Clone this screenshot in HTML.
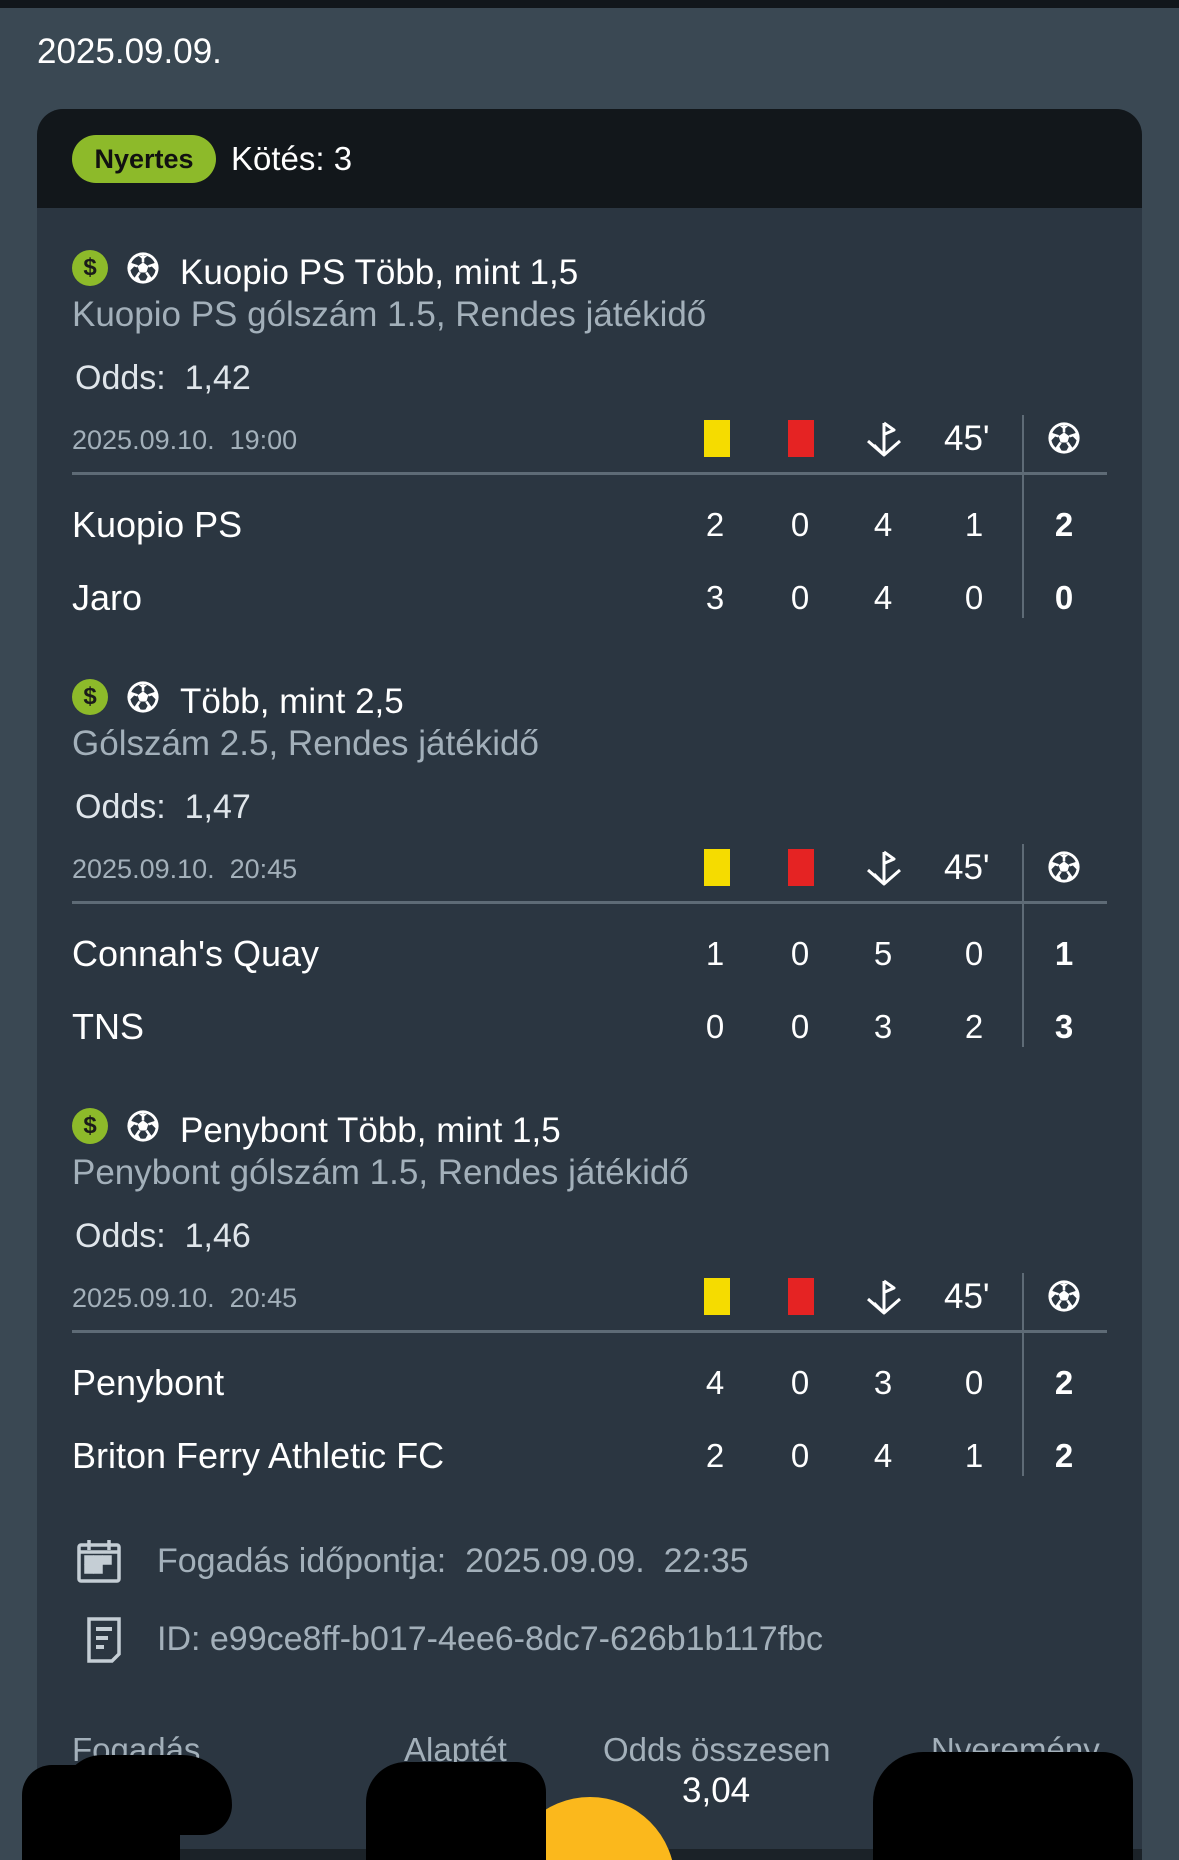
<!DOCTYPE html>
<html style="width:1179px;height:1860px;overflow:hidden"><head><meta charset="utf-8"><style>
*{margin:0;padding:0;box-sizing:border-box}
body{width:1179px;height:1860px;background:#3a4853;font-family:"Liberation Sans",sans-serif;position:relative;overflow:hidden;color:#fff}
#w{position:absolute;left:0;top:0;width:1179px;height:1860px;overflow:hidden}
.a{position:absolute;white-space:nowrap}
.t{font-size:35px;line-height:40px}
.sub{font-size:35px;line-height:40px;color:#a3b0ba}
.num{font-size:33px;line-height:40px;width:40px;text-align:center}
.dt{font-size:27px;line-height:34px;color:#a3b0ba}
</style></head><body><div id="w">
<div class="a" style="left:0;top:0;width:1179px;height:8px;background:#11161b"></div>
<div class="a t" style="left:37px;top:32px">2025.09.09.</div>
<div class="a" style="left:37px;top:109px;width:1105px;height:1751px;background:#2b3641;border-radius:26px 26px 0 0"></div>
<div class="a" style="left:37px;top:109px;width:1105px;height:99px;background:#12171b;border-radius:26px 26px 0 0"></div>
<div class="a" style="left:72px;top:135px;width:144px;height:48px;background:#8dba2a;border-radius:24px;color:#111;font-size:27px;line-height:48px;text-align:center;font-weight:bold">Nyertes</div>
<div class="a t" style="left:231px;top:139px;font-size:33px">Kötés: 3</div>

<div id="secs"></div>
<script>
const data=[
 ["Kuopio PS Több, mint 1,5","Kuopio PS gólszám 1.5, Rendes játékidő","1,42","19:00",["Kuopio PS",2,0,4,1,2],["Jaro",3,0,4,0,0]],
 ["Több, mint 2,5","Gólszám 2.5, Rendes játékidő","1,47","20:45",["Connah's Quay",1,0,5,0,1],["TNS",0,0,3,2,3]],
 ["Penybont Több, mint 1,5","Penybont gólszám 1.5, Rendes játékidő","1,46","20:45",["Penybont",4,0,3,0,2],["Briton Ferry Athletic FC",2,0,4,1,2]]
];
const ball=(cx,cy,r)=>`<svg class="a" style="left:${cx-r}px;top:${cy-r}px" width="${2*r}" height="${2*r}" viewBox="0 0 24 24"><circle cx="12" cy="12" r="11" fill="#fff"/><circle cx="12" cy="12" r="9" fill="#2b3641"/><polygon points="12,8 15.8,10.8 14.4,15.2 9.6,15.2 8.2,10.8" fill="#fff"/><path d="M12 3 L12 8 M15.8 10.8 L20.5 9.3 M14.4 15.2 L17.3 19.5 M9.6 15.2 L6.7 19.5 M8.2 10.8 L3.5 9.3" stroke="#fff" stroke-width="1.8"/><path d="M9 3.4 L15 3.4 L12 6Z M20.8 7.5 L21.3 14 L18.3 11Z M3.2 7.5 L2.7 14 L5.7 11Z M5.5 19.8 L10.5 21.3 L8.3 17.5Z M18.5 19.8 L13.5 21.3 L15.7 17.5Z" fill="#fff"/></svg>`;
let h="";
const cols=[715,800,883,974,1064];
data.forEach((d,i)=>{
 const B=273+429*i;
 h+=`<div class="a" style="left:72px;top:${B-23}px;width:36px;height:36px;border-radius:50%;background:#8dba2a;color:#1a1a1a;font-size:24px;line-height:36px;text-align:center;font-weight:bold">$</div>`;
 h+=ball(143,B-5,17);
 h+=`<div class="a t" style="left:180px;top:${B-20}px">${d[0]}</div>`;
 h+=`<div class="a sub" style="left:72px;top:${B+22}px">${d[1]}</div>`;
 h+=`<div class="a t" style="left:75px;top:${B+85}px;color:#dfe5ea;font-size:34px">Odds:&nbsp; ${d[2]}</div>`;
 h+=`<div class="a dt" style="left:72px;top:${B+150}px">2025.09.10.&nbsp; ${d[3]}</div>`;
 h+=`<div class="a" style="left:704px;top:${B+147}px;width:26px;height:37px;background:#f5dc00"></div>`;
 h+=`<div class="a" style="left:788px;top:${B+147}px;width:26px;height:37px;background:#e52323"></div>`;
 h+=`<svg class="a" style="left:864px;top:${B+146}px" width="40" height="40" viewBox="0 0 40 40" fill="none" stroke="#fff" stroke-width="3" stroke-linejoin="round"><path d="M20 4 L20 36 M20 4 L30 11 L21 15 M4 22 L20 36 L36 22 M10 26 L20 36"/></svg>`;
 h+=`<div class="a" style="left:944px;top:${B+146}px;font-size:35px;line-height:40px">45'</div>`;
 h+=ball(1064,B+165,17);
 h+=`<div class="a" style="left:72px;top:${B+199}px;width:1035px;height:3px;background:#5e6b76"></div>`;
 h+=`<div class="a" style="left:1022px;top:${B+142}px;width:2px;height:203px;background:#5e6b76"></div>`;
 [d[4],d[5]].forEach((r,j)=>{
  const c=B+252+73*j;
  h+=`<div class="a t" style="left:72px;top:${c-20}px;font-size:36px">${r[0]}</div>`;
  for(let k=0;k<5;k++)h+=`<div class="a num" style="left:${cols[k]-20}px;top:${c-20}px;${k==4?'font-weight:bold':''}">${r[k+1]}</div>`;
 });
});
document.getElementById('secs').innerHTML=h;
</script>

<svg class="a" style="left:76px;top:1538px" width="46" height="46" viewBox="0 0 46 46" fill="none" stroke="#c5ced5" stroke-width="3.5"><rect x="3" y="7" width="40" height="36" rx="2"/><path d="M13 2 V12 M33 2 V12 M3 14 H43"/><rect x="10" y="19" width="6" height="6" fill="#c5ced5"/><rect x="19" y="19" width="6" height="6" fill="#c5ced5"/><rect x="28" y="19" width="6" height="6" fill="#c5ced5"/><rect x="10" y="28" width="6" height="6" fill="#c5ced5"/><rect x="19" y="28" width="6" height="6" fill="#c5ced5"/></svg>
<div class="a sub" style="left:157px;top:1541px;font-size:34px">Fogadás időpontja:&nbsp; 2025.09.09.&nbsp; 22:35</div>
<svg class="a" style="left:86px;top:1616px" width="36" height="48" viewBox="0 0 36 48" fill="none" stroke="#c5ced5" stroke-width="3.5"><path d="M3 3 H33 V38 L26 45 H3Z"/><path d="M10 13 H26 M10 22 H22 M10 31 H18" stroke-width="4"/></svg>
<div class="a sub" style="left:157px;top:1619px;font-size:34px">ID: e99ce8ff-b017-4ee6-8dc7-626b1b117fbc</div>

<div class="a sub" style="left:72px;top:1730px;font-size:33px">Fogadás</div>
<div class="a sub" style="left:404px;top:1730px;font-size:33px">Alaptét</div>
<div class="a sub" style="left:603px;top:1730px;font-size:33px">Odds összesen</div>
<div class="a sub" style="left:931px;top:1730px;font-size:33px">Nyeremény</div>
<div class="a t" style="left:682px;top:1771px">3,04</div>
<div class="a" style="left:37px;top:1849px;width:1105px;height:11px;background:#1b2228"></div>
<div class="a" style="left:505px;top:1797px;width:170px;height:63px;overflow:hidden"><div style="width:170px;height:170px;border-radius:50%;background:#fbb81c"></div></div>
<div class="a" style="left:22px;top:1765px;width:88px;height:95px;background:#000;border-radius:30px 30px 0 0"></div>
<div class="a" style="left:62px;top:1755px;width:170px;height:80px;background:#000;border-radius:40px 50px 30px 20px"></div>
<div class="a" style="left:40px;top:1800px;width:140px;height:60px;background:#000;border-radius:20px 20px 0 0"></div>
<div class="a" style="left:366px;top:1762px;width:180px;height:98px;background:#000;border-radius:40px 30px 0 0"></div>
<div class="a" style="left:873px;top:1752px;width:260px;height:108px;background:#000;border-radius:50px 30px 0 0"></div>
</div></body></html>
